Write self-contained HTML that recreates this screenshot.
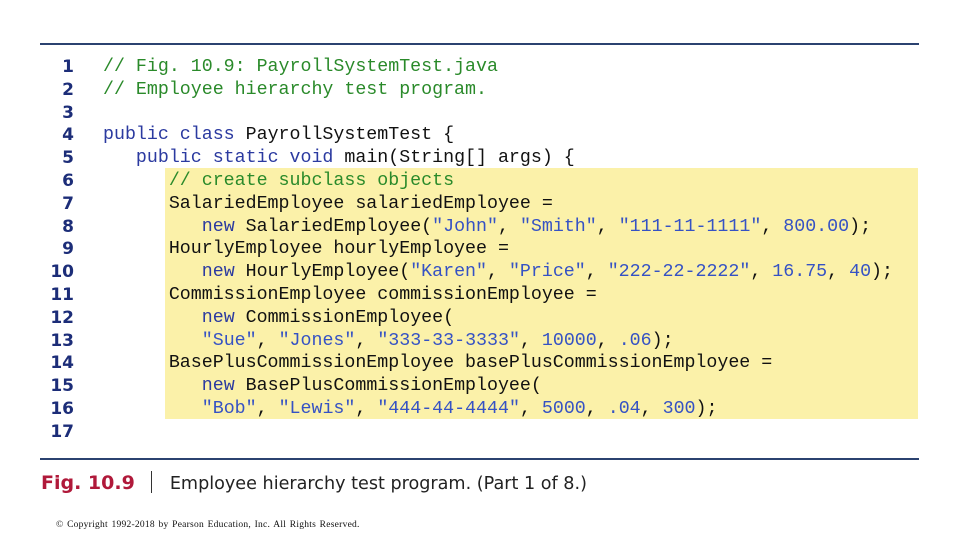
<!DOCTYPE html>
<html><head><meta charset="utf-8"><style>
body{margin:0;width:960px;height:540px;background:#fff;position:relative;overflow:hidden}
.rule{position:absolute;left:40px;width:879px;height:2px;background:#2b4270}
.hl{position:absolute;left:165px;top:168px;width:753px;height:251px;background:#fbf1a9}
.nums{position:absolute;left:40px;top:56px;width:34px;text-align:right;font:bold 17px/22.8px "DejaVu Sans",sans-serif;color:#1c2d78}
.code{position:absolute;left:103px;top:56px;font:18.3px/22.8px "Liberation Mono",monospace;color:#111;white-space:pre;margin:0}
.c{color:#2a8a2a}.k{color:#2b3aa0}.s{color:#3552c4}
.cap{position:absolute;left:41px;top:471px;font:18px "DejaVu Sans",sans-serif;color:#222;white-space:nowrap}
.cap b{color:#b0193a;font-weight:bold;font-size:19px}
.copy{position:absolute;left:56px;top:520px;font:9.5px "Liberation Serif",serif;color:#111;letter-spacing:0.25px;word-spacing:1px}
</style></head><body>
<div class="rule" style="top:43px"></div>
<div class="hl"></div>
<div class="nums">1<br>2<br>3<br>4<br>5<br>6<br>7<br>8<br>9<br>10<br>11<br>12<br>13<br>14<br>15<br>16<br>17</div>
<pre class="code"><span class="c">// Fig. 10.9: PayrollSystemTest.java</span>
<span class="c">// Employee hierarchy test program.</span>

<span class="k">public class</span> PayrollSystemTest {
   <span class="k">public static void</span> main(String[] args) {
      <span class="c">// create subclass objects</span>
      SalariedEmployee salariedEmployee =
         <span class="k">new</span> SalariedEmployee(<span class="s">"John"</span>, <span class="s">"Smith"</span>, <span class="s">"111-11-1111"</span>, <span class="s">800.00</span>);
      HourlyEmployee hourlyEmployee =
         <span class="k">new</span> HourlyEmployee(<span class="s">"Karen"</span>, <span class="s">"Price"</span>, <span class="s">"222-22-2222"</span>, <span class="s">16.75</span>, <span class="s">40</span>);
      CommissionEmployee commissionEmployee =
         <span class="k">new</span> CommissionEmployee(
         <span class="s">"Sue"</span>, <span class="s">"Jones"</span>, <span class="s">"333-33-3333"</span>, <span class="s">10000</span>, <span class="s">.06</span>);
      BasePlusCommissionEmployee basePlusCommissionEmployee =
         <span class="k">new</span> BasePlusCommissionEmployee(
         <span class="s">"Bob"</span>, <span class="s">"Lewis"</span>, <span class="s">"444-44-4444"</span>, <span class="s">5000</span>, <span class="s">.04</span>, <span class="s">300</span>);
</pre>
<div class="rule" style="top:458px"></div>
<div class="cap"><b>Fig. 10.9</b><span style="display:inline-block;width:1px;height:22px;background:#333;margin:0 18px 0 16px;vertical-align:-4px"></span><span style="font-size:17.6px">Employee hierarchy test program. (Part 1 of 8.)</span></div>
<div class="copy">© Copyright 1992-2018 by Pearson Education, Inc. All Rights Reserved.</div>
</body></html>
